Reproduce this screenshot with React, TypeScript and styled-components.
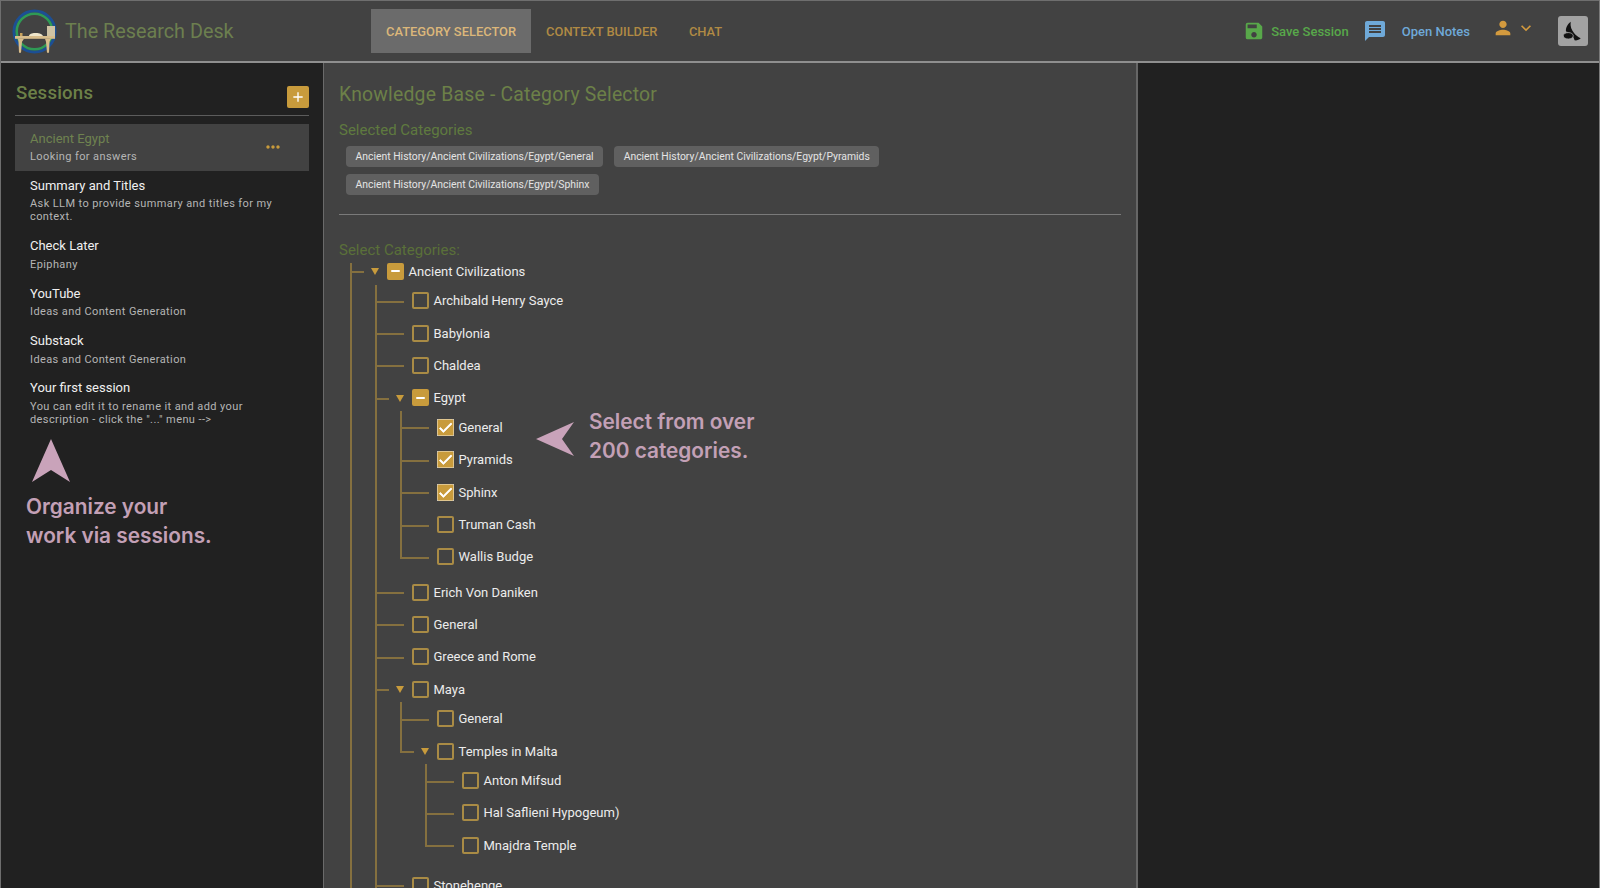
import React from "react";
import styled, { createGlobalStyle } from "styled-components";
import { MdSave, MdMessage, MdPerson, MdKeyboardArrowDown, MdAdd, MdMoreHoriz, MdCheck } from "react-icons/md";

const GOLD = "#c89b3c";
const LINE = "#85703f";
const ROW = 32.4;

const Global = createGlobalStyle`
  html, body { margin: 0; height: 100%; overflow: hidden; background: #212121; }
  body { font-family: Roboto, "Liberation Sans", sans-serif; }
  #root { height: 100%; }
  * { box-sizing: border-box; }
`;

const Page = styled.div`
  height: 888px;
  display: flex;
  flex-direction: column;
  overflow: hidden;
  border-left: 1px solid #6e6e6e;
  border-right: 1px solid #7a7a7a;
`;

const Header = styled.header`
  height: 63px;
  flex: none;
  display: flex;
  align-items: center;
  background: #424242;
  border-top: 1px solid #6e6e6e;
  border-bottom: 2px solid #8f8f8f;
  padding: 0 11px 0 11px;
`;

const Brand = styled.div`
  width: 359px;
  display: flex;
  align-items: center;
  gap: 7px;
  padding-top: 1px;
  font-size: 19.8px;
  color: #6c7f4f;
`;

const Tabs = styled.nav`
  display: flex;
  align-items: center;
  height: 44px;
`;

const Tab = styled.div<{ $active?: boolean }>`
  height: 100%;
  display: flex;
  align-items: center;
  padding: 0 15px;
  font-size: 12.9px;
  font-weight: 500;
  color: ${(p) => (p.$active ? "#dcb77a" : "#b08a44")};
  background: ${(p) => (p.$active ? "#6b6b6b" : "transparent")};
  &:last-child { margin-left: 1.5px; }
`;

const HeaderRight = styled.div`
  margin-left: auto;
  display: flex;
  align-items: center;
`;

const HeaderAction = styled.div<{ $color: string; $gap: number; $mr: number }>`
  display: flex;
  align-items: center;
  gap: ${(p) => p.$gap}px;
  margin-right: ${(p) => p.$mr}px;
  color: ${(p) => p.$color};
  font-size: 13px;
  font-weight: 500;
`;

const UserMenu = styled.div`
  display: flex;
  align-items: center;
  gap: 2px;
  color: #d39a3e;
  margin-right: 22px;
  margin-top: -6px;
`;

const ThemeSquare = styled.div`
  width: 30px;
  height: 30px;
  border-radius: 3px;
  background: #a2a2a2;
  display: flex;
`;

const Body = styled.div`
  flex: 1;
  min-height: 0;
  display: flex;
`;

const Sidebar = styled.aside`
  width: 323px;
  flex: none;
  padding: 0 14px;
  background: #212121;
  border-right: 1px solid #6a6a6a;
`;

const SideHead = styled.div`
  height: 52.5px;
  display: flex;
  align-items: flex-start;
  justify-content: space-between;
  border-bottom: 1px solid #5c5c5c;
  margin-bottom: 8px;
`;

const SideTitle = styled.h2`
  margin: 18px 0 0 1px;
  font-size: 18.6px;
  line-height: 24px;
  font-weight: 500;
  letter-spacing: 0.2px;
  color: #6c8048;
`;

const AddButton = styled.div`
  width: 22px;
  height: 22px;
  margin-top: 23px;
  border-radius: 2px;
  background: ${GOLD};
  color: #fff;
  display: flex;
  align-items: center;
  justify-content: center;
`;

const SessionItem = styled.div<{ $active?: boolean }>`
  display: flex;
  align-items: center;
  justify-content: space-between;
  padding: 5px 26px 7.9px 15px;
  background: ${(p) => (p.$active ? "#424242" : "transparent")};
  svg { margin-top: 2px; }
`;

const SessionTitle = styled.div<{ $active?: boolean }>`
  font-size: 13px;
  line-height: 20px;
  color: ${(p) => (p.$active ? "#6f8250" : "#f0f0f0")};
`;

const SessionSub = styled.div`
  margin-top: 1.5px;
  font-size: 11px;
  line-height: 13px;
  letter-spacing: 0.4px;
  color: #b5b5b5;
`;

const Note = styled.div`
  font-family: Inter, "Open Sans", sans-serif;
  font-size: 20.8px;
  line-height: 29px;
  font-weight: 600;
  color: #c3a0b6;
`;

const SideNote = styled.div`
  margin: 5.1px 0 0 11px;
  display: flex;
  flex-direction: column;
  gap: 9px;
  svg { margin-left: 6px; }
`;

const Main = styled.main`
  width: 814px;
  flex: none;
  padding: 0 15px;
  background: #424242;
  position: relative;
  overflow: hidden;
  border-right: 2px solid #666;
`;

const MainTitle = styled.h1`
  margin: 18px 0 10.5px;
  font-size: 19.4px;
  line-height: 28px;
  font-weight: 400;
  letter-spacing: 0.2px;
  color: #6c8048;
`;

const SectionLabel = styled.div<{ $dim?: boolean }>`
  font-size: 15px;
  line-height: 20px;
  color: ${(p) => (p.$dim ? "#5a7039" : "#5f7a3f")};
`;

const ChipWrap = styled.div`
  display: flex;
  flex-wrap: wrap;
  gap: 7px 11px;
  padding: 6.5px 7px 19px;
  border-bottom: 1px solid #7a7a7a;
  margin-bottom: 25px;
`;

const Chip = styled.span`
  height: 21px;
  display: inline-flex;
  align-items: center;
  padding: 0 9.5px;
  border-radius: 4px;
  background: #606060;
  color: #e4e4e4;
  font-size: 10.4px;
`;

const Tree = styled.ul`
  list-style: none;
  margin: -5px 0 0 11px;
  padding: 0;
`;

const Group = styled.ul`
  list-style: none;
  margin: -2.9px 0 0 25px;
  padding: 0 0 2.7px;
`;

const Node = styled.li<{ $root?: boolean; $open?: boolean }>`
  position: relative;
  &::before {
    content: "";
    position: absolute;
    left: 0;
    top: ${(p) => (p.$root ? 8 : 0)}px;
    bottom: 0;
    width: 2px;
    background: ${LINE};
  }
  &:last-child::before {
    ${(p) => (p.$root || p.$open ? "" : `bottom: auto; height: ${ROW / 2 + 1}px;`)}
  }
  &:last-child > ul {
    padding-bottom: 4.7px;
  }
`;

const Row = styled.div<{ $branch?: boolean }>`
  position: relative;
  height: ${ROW}px;
  display: flex;
  align-items: center;
  padding-left: 37px;
  gap: 4.5px;
  font-size: 13px;
  color: #ececec;
  &::before {
    content: "";
    position: absolute;
    left: 0;
    top: 50%;
    height: 2px;
    width: ${(p) => (p.$branch ? 14 : 29)}px;
    background: ${LINE};
  }
`;

const Caret = styled.span`
  position: absolute;
  left: 21px;
  top: 50%;
  margin-top: -3px;
  width: 0;
  height: 0;
  border-left: 4.5px solid transparent;
  border-right: 4.5px solid transparent;
  border-top: 7px solid ${GOLD};
`;

const Box = styled.span<{ $filled?: boolean }>`
  width: 17px;
  height: 17px;
  flex: none;
  border-radius: 2px;
  border: 2px solid ${(p) => (p.$filled ? GOLD : "#a98b45")};
  background: ${(p) => (p.$filled ? GOLD : "transparent")};
  color: #fff;
  display: flex;
  align-items: center;
  justify-content: center;
`;

const Dash = styled.span`
  width: 9px;
  height: 2px;
  border-radius: 1px;
  background: #fff;
`;

const Callout = styled.div`
  position: absolute;
  left: 212px;
  top: 344px;
  display: flex;
  align-items: center;
  gap: 15px;
  svg { margin-top: 6px; }
`;

type TreeItem = { name: string; state?: "mixed" | "checked"; open?: boolean; children?: TreeItem[] };

const tree: TreeItem[] = [
  {
    name: "Ancient Civilizations",
    state: "mixed",
    children: [
      { name: "Archibald Henry Sayce" },
      { name: "Babylonia" },
      { name: "Chaldea" },
      {
        name: "Egypt",
        state: "mixed",
        children: [
          { name: "General", state: "checked" },
          { name: "Pyramids", state: "checked" },
          { name: "Sphinx", state: "checked" },
          { name: "Truman Cash" },
          { name: "Wallis Budge" },
        ],
      },
      { name: "Erich Von Daniken" },
      { name: "General" },
      { name: "Greece and Rome" },
      {
        name: "Maya",
        children: [
          { name: "General" },
          {
            name: "Temples in Malta",
            children: [{ name: "Anton Mifsud" }, { name: "Hal Saflieni Hypogeum)" }, { name: "Mnajdra Temple" }],
          },
        ],
      },
      { name: "Stonehenge", open: true },
    ],
  },
];

const sessions = [
  { title: "Ancient Egypt", sub: "Looking for answers", active: true },
  { title: "Summary and Titles", sub: "Ask LLM to provide summary and titles for my context." },
  { title: "Check Later", sub: "Epiphany" },
  { title: "YouTube", sub: "Ideas and Content Generation" },
  { title: "Substack", sub: "Ideas and Content Generation" },
  { title: "Your first session", sub: 'You can edit it to rename it and add your description - click the "..." menu -->' },
];

const chips = [
  "Ancient History/Ancient Civilizations/Egypt/General",
  "Ancient History/Ancient Civilizations/Egypt/Pyramids",
  "Ancient History/Ancient Civilizations/Egypt/Sphinx",
];

const Logo = () => (
  <svg width="46" height="46" viewBox="0 0 46 46">
    <circle cx="22.5" cy="22.5" r="20.5" fill="none" stroke="#1c4f94" strokeWidth="3" />
    <circle cx="22.5" cy="22.5" r="17.8" fill="none" stroke="#2f9a55" strokeWidth="2.5" />
    <rect x="3" y="27" width="40" height="2.8" fill="#d8bd8c" />
    <path d="M6 29.8h6l-2 3-1 11H7l-.5-11zM33 29.8h6l-1.5 3-.5 11h-2l-1-11z" fill="#d8bd8c" />
    <rect x="35" y="17" width="8" height="10" fill="#cfc3a4" />
    <path d="M17 27c0-2 3-3 6-3s7 .5 8 3z" fill="#efe6cc" />
    <rect x="8" y="24" width="2.5" height="3" fill="#c9a35e" />
  </svg>
);

const MoonGlyph = () => (
  <svg width="30" height="30" viewBox="0 0 30 30">
    <path d="M12.7 5.7C12 10 13.5 14 16 17c2 2.5 4 4 6.7 5.300-1.700 1.700-4.200 2.400-6.200 2-.5-3.300-3.500-7.800-8.500-8.800-.5-3.500 1.500-7.500 4.700-9.800z" fill="#111" />
    <ellipse cx="10.3" cy="19.8" rx="5" ry="3.2" fill="#111" stroke="#a2a2a2" strokeWidth="0.8" />
  </svg>
);

const UpArrow = () => (
  <svg width="38" height="44" viewBox="0 0 38 44">
    <path d="M19 0L38 43 19 31 0 43z" fill="#c9a3ba" />
  </svg>
);

const LeftArrow = () => (
  <svg width="38" height="34" viewBox="0 0 38 34">
    <path d="M0 17L38 0 26 17 38 34z" fill="#c9a3ba" />
  </svg>
);

function TreeBranch({ item, root }: { item: TreeItem; root?: boolean }) {
  const hasKids = !!item.children;
  return (
    <Node $root={root} $open={item.open}>
      <Row $branch={hasKids}>
        {hasKids && <Caret />}
        <Box $filled={!!item.state}>
          {item.state === "mixed" && <Dash />}
          {item.state === "checked" && <MdCheck size={17} strokeWidth={1.2} style={{ flex: "none" }} />}
        </Box>
        {item.name}
      </Row>
      {item.children && (
        <Group>
          {item.children.map((c) => (
            <TreeBranch key={c.name} item={c} />
          ))}
        </Group>
      )}
    </Node>
  );
}

export default function App() {
  return (
    <Page>
      <Global />
      <Header>
        <Brand>
          <Logo />
          The Research Desk
        </Brand>
        <Tabs>
          <Tab $active>CATEGORY SELECTOR</Tab>
          <Tab>CONTEXT BUILDER</Tab>
          <Tab>CHAT</Tab>
        </Tabs>
        <HeaderRight>
          <HeaderAction $color="#58a84a" $gap={6} $mr={14}>
            <MdSave size={22} />
            Save Session
          </HeaderAction>
          <HeaderAction $color="#6fa9d8" $gap={15} $mr={22}>
            <MdMessage size={24} />
            Open Notes
          </HeaderAction>
          <UserMenu>
            <MdPerson size={22} />
            <MdKeyboardArrowDown size={20} />
          </UserMenu>
          <ThemeSquare>
            <MoonGlyph />
          </ThemeSquare>
        </HeaderRight>
      </Header>
      <Body>
        <Sidebar>
          <SideHead>
            <SideTitle>Sessions</SideTitle>
            <AddButton>
              <MdAdd size={16} />
            </AddButton>
          </SideHead>
          {sessions.map((s) => (
            <SessionItem key={s.title} $active={s.active}>
              <div>
                <SessionTitle $active={s.active}>{s.title}</SessionTitle>
                <SessionSub>{s.sub}</SessionSub>
              </div>
              {s.active && <MdMoreHoriz size={20} color={GOLD} />}
            </SessionItem>
          ))}
          <SideNote>
            <UpArrow />
            <Note>
              Organize your
              <br />
              work via sessions.
            </Note>
          </SideNote>
        </Sidebar>
        <Main>
          <MainTitle>Knowledge Base - Category Selector</MainTitle>
          <SectionLabel>Selected Categories</SectionLabel>
          <ChipWrap>
            {chips.map((c) => (
              <Chip key={c}>{c}</Chip>
            ))}
          </ChipWrap>
          <SectionLabel $dim>Select Categories:</SectionLabel>
          <Tree>
            {tree.map((t) => (
              <TreeBranch key={t.name} item={t} root />
            ))}
          </Tree>
          <Callout>
            <LeftArrow />
            <Note>
              Select from over
              <br />
              200 categories.
            </Note>
          </Callout>
        </Main>
      </Body>
    </Page>
  );
}
